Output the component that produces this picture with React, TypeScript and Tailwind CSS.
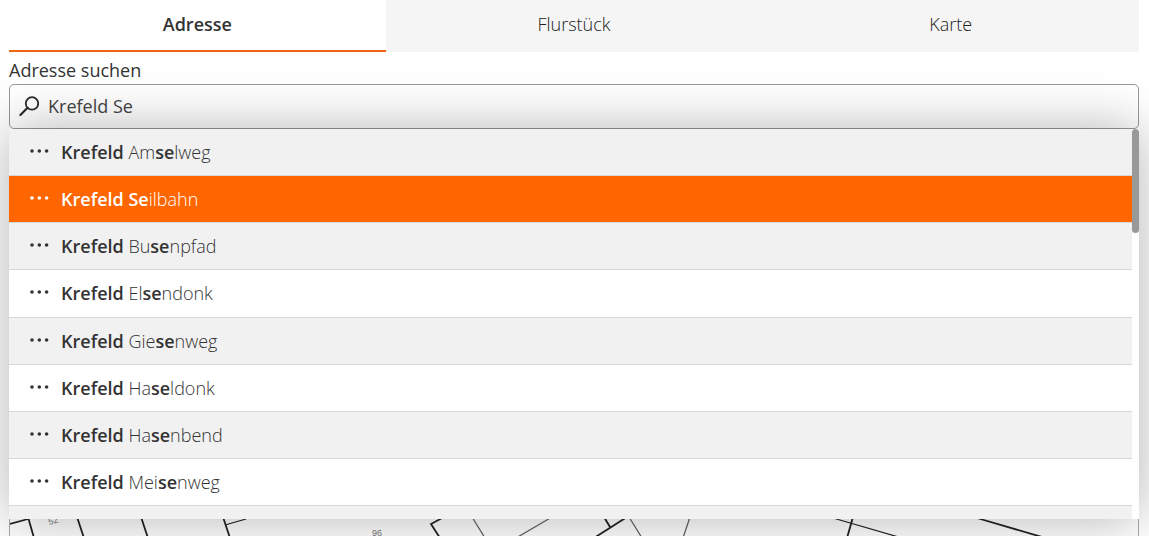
import { useState } from 'react';

const TABS = ['Adresse', 'Flurstück', 'Karte'];

const STREETS = [
  'Amselweg',
  'Seilbahn',
  'Busenpfad',
  'Elsendonk',
  'Giesenweg',
  'Haseldonk',
  'Hasenbend',
  'Meisenweg',
];

function Highlight({ text }: { text: string }) {
  return (
    <>
      {text.split(/(se)/i).map((part, i) =>
        part.toLowerCase() === 'se' ? (
          <b key={i} className="font-semibold">{part}</b>
        ) : (
          <span key={i}>{part}</span>
        )
      )}
    </>
  );
}

function SearchIcon() {
  return (
    <svg className="w-5 h-5 shrink-0" viewBox="0 0 20 20" fill="none" stroke="#2b2b2b" strokeWidth="1.8">
      <circle cx="13" cy="7.4" r="6.2" />
      <path d="M8.6 11.8L1.4 19" strokeWidth="2.2" strokeLinecap="round" />
    </svg>
  );
}

function Dots() {
  return (
    <svg className="w-5 h-5 shrink-0" viewBox="0 0 20 20" fill="currentColor">
      <circle cx="3" cy="9" r="1.8" />
      <circle cx="10.3" cy="9" r="1.8" />
      <circle cx="17.6" cy="9" r="1.8" />
    </svg>
  );
}

function ParcelMap() {
  return (
    <svg
      className="w-full h-full"
      viewBox="10 146 1128 390"
      preserveAspectRatio="xMinYMax slice"
      fill="none"
      stroke="#222"
      strokeWidth="1.8"
    >
      <path d="M10 524L28 519M28 517L34 538M77 517L84 538M141 517L148 538M223 517L230 538" />
      <path d="M225 525L246 519" strokeWidth="1.2" />
      <path d="M444 517L431 524L440 538M594 538L627 517M604 517L610 527" />
      <path d="M472 517L485 538M516 538L552 517M629 517L642 538M690 517L683 538" stroke="#666" strokeWidth="1.3" />
      <path d="M853 517L847 538M977 518L1042 537" />
      <path d="M833 518L902 538" strokeWidth="1.2" />
      <g fill="#777" stroke="none" fontSize="9" fontFamily="Liberation Sans, sans-serif">
        <text x="372" y="536">96</text>
        <text x="48" y="524" transform="rotate(-15 52 520)">52</text>
      </g>
    </svg>
  );
}

export default function App() {
  const [tab, setTab] = useState('Adresse');
  const [query, setQuery] = useState('Krefeld Se');
  const [selected, setSelected] = useState('Seilbahn');

  return (
    <main className="h-screen overflow-hidden flex flex-col pl-[9px] pr-[10px] bg-white text-lg leading-6 text-[#333] font-['Open_Sans',sans-serif]">
      {/* Tabs */}
      <div role="tablist" className="grid grid-cols-3 shrink-0">
        {TABS.map((name) => (
          <button
            key={name}
            role="tab"
            aria-selected={tab === name}
            onClick={() => setTab(name)}
            className={`h-[52px] pb-0.5 border-b-2 cursor-pointer ${
              tab === name
                ? 'bg-white border-[#f0660f] font-semibold'
                : 'bg-[#f5f5f5] border-[#f5f5f5] text-[#222] font-light'
            }`}
          >
            {name}
          </button>
        ))}
      </div>

      {/* Search field */}
      <label htmlFor="address" className="pt-1.5 pb-0.5 shrink-0 font-medium">
        Adresse suchen
      </label>
      <div className="relative shrink-0">
        <div className="h-[45px] flex items-center gap-[9px] pl-[9px] pb-0.5 border border-[#999] rounded-[5px]">
          <SearchIcon />
          <input
            id="address"
            type="text"
            autoComplete="off"
            value={query}
            onChange={(e) => setQuery(e.target.value)}
            className="flex-1 min-w-0 bg-transparent text-[#444] outline-none"
          />
        </div>

        {/* Suggestions */}
        <div className="absolute top-full inset-x-0 flex bg-white shadow-[0_0_50px_rgba(0,0,0,0.3)]">
          <div className="flex-1">
            <ul className="h-[377px] grid auto-rows-fr">
              {STREETS.map((street) => (
                <li key={street} className="odd:bg-[#f1f1f1]">
                  <button
                    onClick={() => setSelected(street)}
                    className={`w-full h-full flex items-center gap-3 pl-5 border-b border-[#d8d8d8] text-left font-light cursor-pointer ${
                      selected === street ? 'bg-[#ff6600] text-white' : 'text-[#333]'
                    }`}
                  >
                    <Dots />
                    <span>
                      <b className="font-semibold">Krefeld</b> <Highlight text={street} />
                    </span>
                  </button>
                </li>
              ))}
            </ul>
            <div className="h-[13px] bg-[#f1f1f1]" />
          </div>
          <div className="w-[7px]">
            <div className="h-[104px] rounded-full bg-[#999]" />
          </div>
        </div>
      </div>

      <div className="flex-1 min-h-0 mt-4 border border-b-0 border-[#aaa]">
        <ParcelMap />
      </div>
    </main>
  );
}
